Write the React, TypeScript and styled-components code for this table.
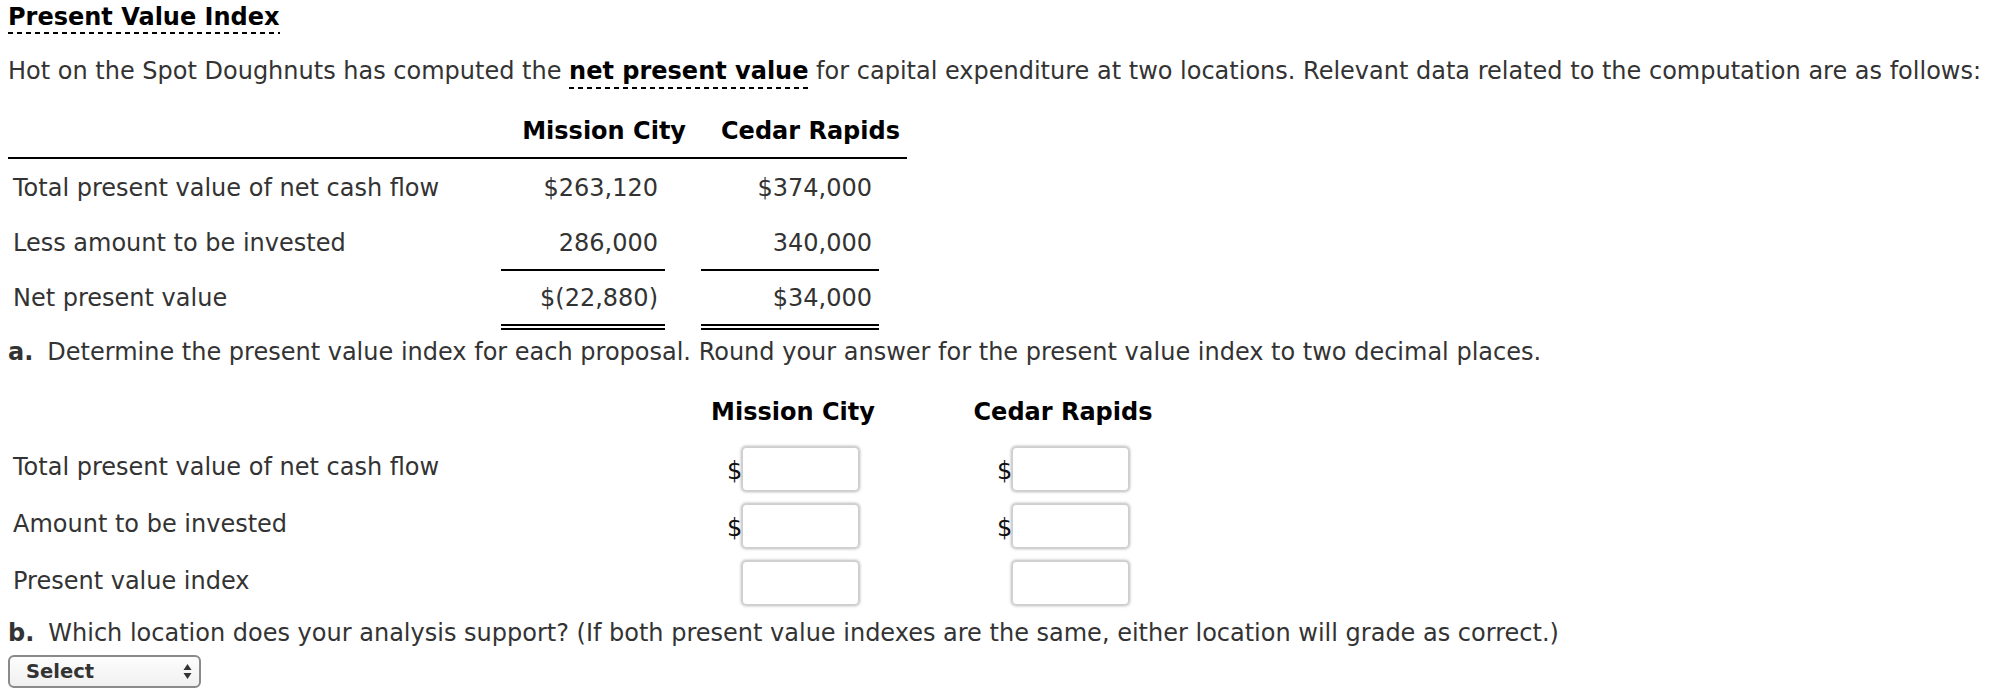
import React from 'react';
import styled, { createGlobalStyle } from 'styled-components';

const GlobalStyle = createGlobalStyle`
  html, body {
    margin: 0;
    padding: 0;
    background: #ffffff;
  }
  body {
    font-family: "DejaVu Sans", Verdana, sans-serif;
    font-size: 24px;
    color: #333333;
  }
`;

const Page = styled.div`
  padding: 3px 8px 0 8px;
  width: 2004px;
  box-sizing: border-box;
`;

const dashed = `
  background-image: linear-gradient(to right, currentColor 0 5px, transparent 5px 9px);
  background-size: 9px 2px;
  background-repeat: repeat-x;
  background-position: left bottom;
`;

const Title = styled.h1`
  display: inline-block;
  margin: 0;
  font-size: 24px;
  line-height: 28px;
  font-weight: bold;
  color: #000000;
  padding-bottom: 3px;
  ${dashed}
`;

const Intro = styled.p`
  margin: 23px 0 0 0;
  line-height: 28px;
  white-space: nowrap;
`;

const Term = styled.span`
  font-weight: bold;
  color: #000000;
  padding-bottom: 4px;
  ${dashed}
`;

const DataGrid = styled.div`
  display: grid;
  grid-template-columns: 485px 200px 214px;
  width: 899px;
  margin-top: 32px;
`;

const HeadCell = styled.div`
  font-weight: bold;
  color: #000000;
  line-height: 28px;
  padding: 0 7px 12px 0;
  text-align: right;
  white-space: nowrap;
  border-bottom: 2px solid #000000;
`;

const RowLabel = styled.div<{ $height: number }>`
  height: ${p => p.$height}px;
  display: flex;
  align-items: center;
  padding-left: 5px;
  white-space: nowrap;
`;

const AmountCell = styled.div<{ $height: number; $rule?: 'single' | 'double' }>`
  height: ${p => p.$height}px;
  margin: 0 28px 0 8px;
  padding-right: 7px;
  display: flex;
  align-items: center;
  justify-content: flex-end;
  border-bottom: ${p =>
    p.$rule === 'single' ? '2px solid #000' : p.$rule === 'double' ? '6px double #000' : 'none'};
`;

const Question = styled.p`
  margin: 8px 0 0 0;
  line-height: 28px;
  white-space: nowrap;
`;

const Letter = styled.b`
  font-weight: bold;
  margin-right: 14px;
`;

const AnswerGrid = styled.div`
  display: grid;
  grid-template-columns: 650px 270px 270px;
  margin-top: 32px;
`;

const AnswerHead = styled.div`
  font-weight: bold;
  color: #000000;
  line-height: 28px;
  height: 42px;
  text-align: center;
  white-space: nowrap;
`;

const AnswerLabel = styled.div`
  height: 57px;
  display: flex;
  align-items: center;
  padding-left: 5px;
  padding-bottom: 3px;
  box-sizing: border-box;
  white-space: nowrap;
`;

const AnswerCell = styled.div`
  height: 57px;
  display: flex;
  align-items: center;
  justify-content: center;
`;

const Prefix = styled.span`
  width: 15px;
  color: #111111;
  font-size: 24px;
  text-align: left;
  padding-top: 4px;
`;

const Field = styled.input`
  width: 117px;
  height: 44px;
  box-sizing: border-box;
  border: 1px solid #cfcfcf;
  border-radius: 4px;
  box-shadow: 0 0 3px 1px rgba(0, 0, 0, 0.28);
  background: #ffffff;
  font-family: inherit;
  font-size: 18px;
  padding: 0 6px;
  outline: none;
`;

const SelectBox = styled.div`
  margin-top: 8px;
  width: 193px;
  height: 33px;
  box-sizing: border-box;
  border: 2px solid #8a8a8a;
  border-radius: 6px;
  background: linear-gradient(#fdfdfd, #f0f0f0);
  display: flex;
  align-items: center;
  justify-content: space-between;
  padding: 0 7px 0 16px;
  font-size: 19.5px;
  font-weight: bold;
  color: #333333;
`;

const Arrows = () => (
  <svg width="9" height="17" viewBox="0 0 9 17">
    <path d="M4.5 1 L8.5 7 L0.5 7 Z" fill="#333" />
    <path d="M4.5 16 L8.5 10 L0.5 10 Z" fill="#333" />
  </svg>
);

const dataRows = [
  { label: 'Total present value of net cash flow', a: '$263,120', b: '$374,000', h: 57 },
  { label: 'Less amount to be invested', a: '286,000', b: '340,000', h: 53, rule: 'single' as const },
  { label: 'Net present value', a: '$(22,880)', b: '$34,000', h: 53, rule: 'double' as const },
];

const answerRows = [
  { label: 'Total present value of net cash flow', prefix: '$' },
  { label: 'Amount to be invested', prefix: '$' },
  { label: 'Present value index', prefix: '' },
];

export default function App() {
  return (
    <>
      <GlobalStyle />
      <Page>
        <Title>Present Value Index</Title>
        <Intro>
          Hot on the Spot Doughnuts has computed the <Term>net present value</Term> for capital
          expenditure at two locations. Relevant data related to the computation are as follows:
        </Intro>

        <DataGrid>
          <HeadCell />
          <HeadCell>Mission City</HeadCell>
          <HeadCell>Cedar Rapids</HeadCell>
          {dataRows.map(r => (
            <React.Fragment key={r.label}>
              <RowLabel $height={r.h}>{r.label}</RowLabel>
              <AmountCell $height={r.h} $rule={r.rule}>{r.a}</AmountCell>
              <AmountCell $height={r.h} $rule={r.rule}>{r.b}</AmountCell>
            </React.Fragment>
          ))}
        </DataGrid>

        <Question>
          <Letter>a.</Letter>Determine the present value index for each proposal. Round your answer
          for the present value index to two decimal places.
        </Question>

        <AnswerGrid>
          <AnswerHead />
          <AnswerHead>Mission City</AnswerHead>
          <AnswerHead>Cedar Rapids</AnswerHead>
          {answerRows.map(r => (
            <React.Fragment key={r.label}>
              <AnswerLabel>{r.label}</AnswerLabel>
              <AnswerCell>
                <Prefix>{r.prefix}</Prefix>
                <Field type="text" />
              </AnswerCell>
              <AnswerCell>
                <Prefix>{r.prefix}</Prefix>
                <Field type="text" />
              </AnswerCell>
            </React.Fragment>
          ))}
        </AnswerGrid>

        <Question>
          <Letter>b.</Letter>Which location does your analysis support? (If both present value
          indexes are the same, either location will grade as correct.)
        </Question>
        <SelectBox>
          <span>Select</span>
          <Arrows />
        </SelectBox>
      </Page>
    </>
  );
}
